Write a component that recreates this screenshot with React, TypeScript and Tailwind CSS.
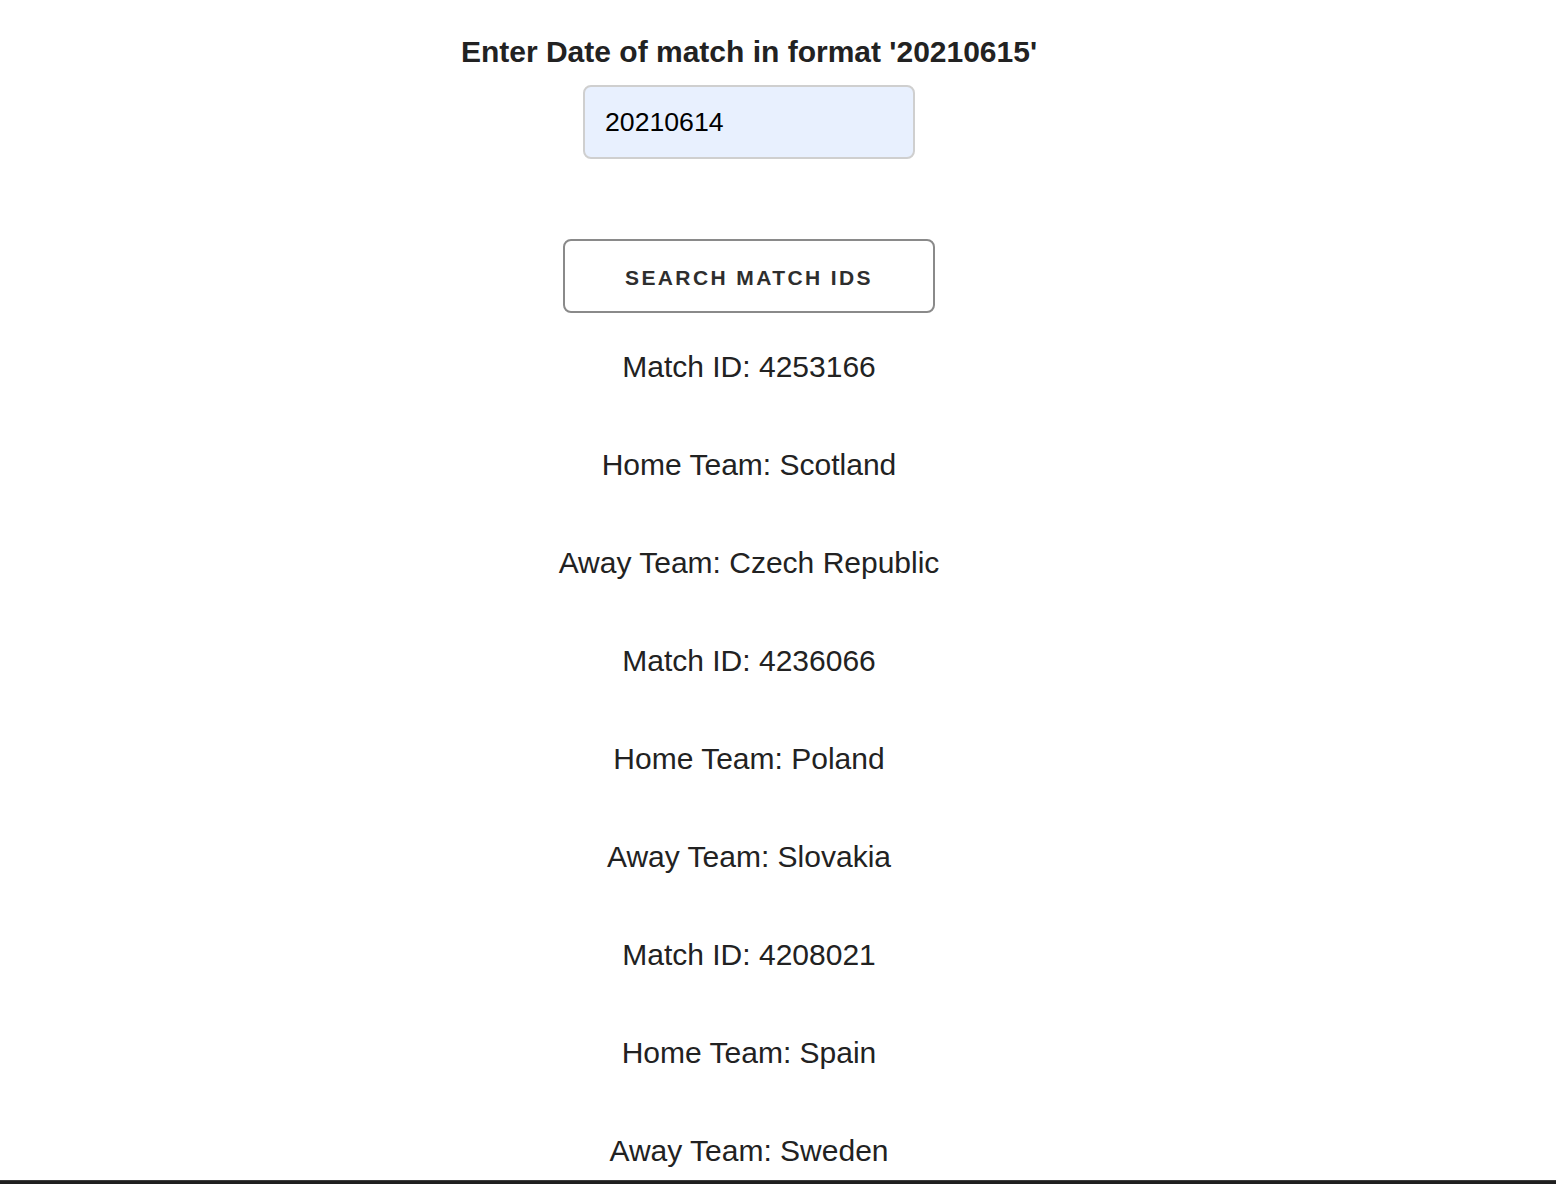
const matches = [
  { id: 4253166, home: 'Scotland', away: 'Czech Republic' },
  { id: 4236066, home: 'Poland', away: 'Slovakia' },
  { id: 4208021, home: 'Spain', away: 'Sweden' },
];

function MatchInfo({ id, home, away }: { id: number; home: string; away: string }) {
  return (
    <>
      <p className="leading-[34px]">Match ID: {id}</p>
      <p className="leading-[34px]">Home Team: {home}</p>
      <p className="leading-[34px]">Away Team: {away}</p>
    </>
  );
}

function App() {
  return (
    <div className="flex h-[1184px] flex-col bg-white font-['Liberation_Sans',Arial,sans-serif] text-[#222]">
      <main className="flex-1 overflow-hidden">
        <div className="flex w-[1498px] flex-col items-center pt-[36px]">
          <h2 className="text-[30px] font-bold leading-[32px]">
            Enter Date of match in format '20210615'
          </h2>
          <input
            className="mt-[17px] h-[74px] w-[332px] rounded-[8px] border-2 border-[#cfcfcf] bg-[#e8f0fe] px-[20px] text-[26.67px] text-black outline-none"
            defaultValue="20210614"
          />
          <button className="mt-[80px] h-[74px] w-[372px] rounded-[8px] border-2 border-[#8a8a8a] bg-white pt-[4px] text-[21px] font-bold tracking-[2.4px] text-[#2e2e2e]">
            SEARCH MATCH IDS
          </button>
          <div className="mt-[37px] flex flex-col items-center gap-[64px] text-[30px]">
            {matches.map((m) => (
              <MatchInfo key={m.id} {...m} />
            ))}
          </div>
        </div>
      </main>
      <div className="h-[4px] border-t border-[#3c3c3c] bg-[#1f1f1f]" />
    </div>
  );
}

export default App;
